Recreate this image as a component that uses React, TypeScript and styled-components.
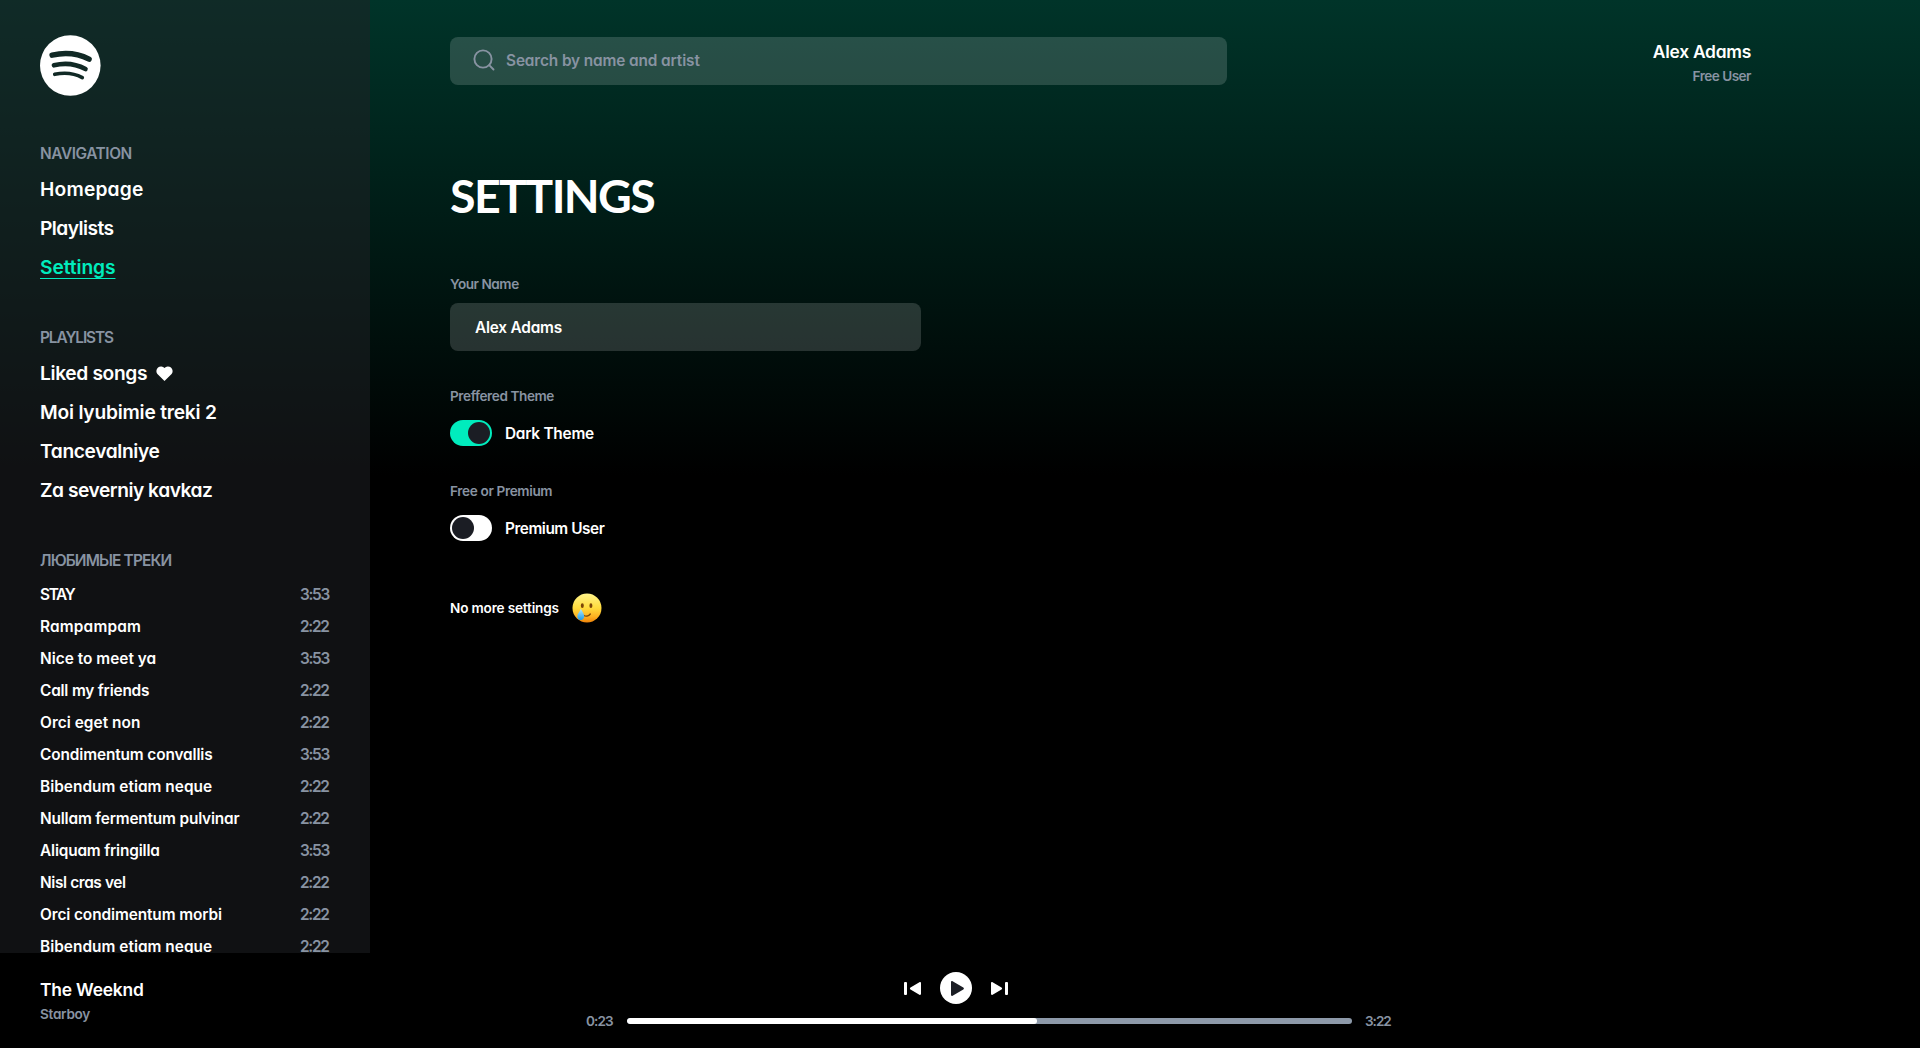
import React from "react";
import styled, { createGlobalStyle } from "styled-components";

const color = {
  text: "#fff",
  muted: "#8893a2",
  rail: "#8d99a9",
  accent: "#00ecbd",
  ink: "#1b1d24",
  field: "rgba(246, 255, 255, 0.158)",
};

const GlobalStyle = createGlobalStyle`
  *, *::before, *::after { box-sizing: border-box; }
  body {
    margin: 0;
    background: #000;
    color: ${color.text};
    font-family: Inter, "Open Sans", sans-serif;
    font-feature-settings: "cv11";
    overflow: hidden;
  }
  ul { list-style: none; margin: 0; padding: 0; }
  button { border: 0; padding: 0; background: none; color: inherit; font: inherit; cursor: pointer; }
`;

/* ---------- shell ---------- */

const Shell = styled.div`
  display: flex;
  flex-direction: column;
  height: 100vh;
  background: linear-gradient(180deg, #003429 0, #000 475px);
`;

const Body = styled.div`
  display: flex;
  flex: 1;
  min-height: 0;
`;

const Sidebar = styled.aside`
  flex: none;
  width: 370px;
  padding: 35px 40px 0;
  overflow: hidden;
  background: rgba(32, 34, 38, 0.5);
`;

const Main = styled.main`
  flex: 1;
  padding: 37px 169px 0 80px;
`;

/* ---------- text ---------- */

const Tracked = styled.span<{ $track?: number }>`
  letter-spacing: ${(p) => p.$track ?? 0}px;
  white-space: nowrap;
`;

const Caption = styled(Tracked)`
  display: block;
  font-size: 13.6px;
  font-weight: 600;
  line-height: 20px;
  color: ${color.muted};
`;

/* ---------- sidebar ---------- */

const Logo = styled.svg`
  display: block;
  width: 60.6px;
  height: 61px;
`;

const Group = styled.section<{ $top: number }>`
  margin-top: ${(p) => p.$top}px;
`;

const GroupTitle = styled.h2<{ $track?: number }>`
  margin: 0;
  font-size: 15.4px;
  font-weight: 600;
  line-height: 20px;
  letter-spacing: ${(p) => p.$track ?? 0}px;
  color: ${color.muted};
`;

const LinkList = styled.ul`
  margin-top: 6px;
`;

const LinkRow = styled.li`
  display: flex;
  align-items: center;
  gap: 9px;
  height: 39px;
`;

const NavLink = styled.a<{ $track: number; $active?: boolean }>`
  font-size: 19.2px;
  font-weight: 600;
  line-height: 39px;
  letter-spacing: ${(p) => p.$track}px;
  color: ${(p) => (p.$active ? color.accent : color.text)};
  text-decoration: ${(p) => (p.$active ? "underline" : "none")};
  text-decoration-thickness: 1px;
  text-underline-offset: 4px;
`;

const Heart = styled.svg`
  width: 17px;
  height: 15px;
  margin-top: -1px;
`;

const TrackList = styled.ul`
  margin-top: 8px;
`;

const TrackRow = styled.li`
  display: flex;
  justify-content: space-between;
  height: 32px;
  font-size: 15.4px;
  line-height: 32px;
`;

const TrackName = styled(Tracked)`
  font-weight: 600;
`;

const TrackTime = styled(Tracked)`
  width: 30px;
  font-weight: 600;
  color: ${color.muted};
`;

/* ---------- header ---------- */

const Header = styled.header`
  display: flex;
  justify-content: space-between;
  height: 48px;
`;

const SearchBox = styled.label`
  display: flex;
  align-items: center;
  width: 777px;
  height: 48px;
  padding-left: 23px;
  gap: 11px;
  border-radius: 8px;
  background: ${color.field};
  color: ${color.muted};
`;

const SearchIcon = styled.svg`
  flex: none;
  width: 22px;
  height: 22px;
  margin-top: -2px;
`;

const Input = styled.input`
  flex: 1;
  min-width: 0;
  height: 48px;
  padding: 0;
  border: 0;
  outline: 0;
  background: none;
  color: ${color.text};
  font: 600 15.4px Inter, "Open Sans", sans-serif;
  font-feature-settings: "cv11";
  letter-spacing: -0.12px;
  &::placeholder { color: ${color.muted}; opacity: 1; }
`;

const SearchInput = styled(Input)`
  height: 46px;
  margin-bottom: 2px;
`;

const User = styled.div`
  display: flex;
  flex-direction: column;
  align-items: flex-end;
  gap: 2px;
  padding-top: 3px;
`;

const UserName = styled(Tracked)`
  display: block;
  font-size: 17.4px;
  font-weight: 600;
  line-height: 24px;
`;

/* ---------- settings ---------- */

const Title = styled.h1`
  margin: 81px 0 0;
  font-family: Lato, Inter, sans-serif;
  font-size: 46.5px;
  font-weight: 700;
  line-height: 58px;
  letter-spacing: -1.6px;
`;

const Field = styled.div<{ $top: number }>`
  margin-top: ${(p) => p.$top}px;
`;

const NameBox = styled.div`
  width: 471px;
  height: 48px;
  margin-top: 9px;
  padding: 0 25px;
  border-radius: 8px;
  background: ${color.field};
`;

const NameInput = styled(Input)`
  width: 100%;
  letter-spacing: -0.22px;
`;

const SwitchRow = styled.div`
  display: flex;
  align-items: center;
  gap: 13px;
  height: 26px;
  margin-top: 14px;
`;

const Switch = styled.button<{ $on: boolean }>`
  display: flex;
  justify-content: ${(p) => (p.$on ? "flex-end" : "flex-start")};
  width: 42px;
  height: 26px;
  padding: 2px;
  border-radius: 13px;
  background: ${(p) => (p.$on ? color.accent : color.text)};
`;

const Knob = styled.span`
  width: 22px;
  height: 22px;
  border-radius: 50%;
  background: ${color.ink};
`;

const SwitchLabel = styled(Tracked)`
  padding-top: 2px;
  font-size: 15.4px;
  font-weight: 600;
  line-height: 26px;
`;

const Note = styled.p`
  display: flex;
  align-items: center;
  gap: 13px;
  height: 30px;
  margin: 52px 0 0;
  font-size: 13.6px;
  font-weight: 600;
  letter-spacing: -0.177px;
`;

const Emoji = styled.svg`
  width: 30px;
  height: 30px;
`;

/* ---------- player ---------- */

const Player = styled.footer`
  display: grid;
  grid-template-columns: 546px 806px 1fr;
  flex: none;
  height: 95px;
  padding-left: 40px;
  background: #000;
`;

const NowPlaying = styled.div`
  display: flex;
  flex-direction: column;
  gap: 2px;
  padding-top: 25px;
`;

const Artist = styled(Tracked)`
  display: block;
  font-size: 17.4px;
  font-weight: 600;
  line-height: 24px;
`;

const Controls = styled.div`
  display: flex;
  justify-content: center;
  align-items: center;
  gap: 19px;
  height: 32px;
  margin-top: 19px;
  padding-right: 66px;
`;

const RoundButton = styled.button`
  display: grid;
  place-items: center;
  width: 32px;
  height: 32px;
  padding-left: 3px;
  border-radius: 50%;
  background: ${color.text};
`;

const SkipButton = styled.button`
  display: grid;
  place-items: center;
  width: 17px;
  height: 32px;
`;

const SkipIcon = styled.svg<{ $flip?: boolean }>`
  width: 17px;
  height: 13px;
  transform: ${(p) => (p.$flip ? "scaleX(-1)" : "none")};
`;

const Timeline = styled.div`
  display: flex;
  align-items: center;
  height: 20px;
  margin-top: 7px;
`;

const TimeMark = styled(Caption)`
  width: 41px;
`;

const Rail = styled.div`
  width: 725px;
  height: 6px;
  margin-right: 13px;
  overflow: hidden;
  border-radius: 3px;
  background: ${color.rail};
`;

const RailFill = styled.div`
  height: 6px;
  border-radius: 3px;
  background: #fff;
`;

/* ---------- data ---------- */

const tracks: { name: string; time: string; track: number }[] = [
  { name: "STAY", time: "3:53", track: -1.35 },
  { name: "Rampampam", time: "2:22", track: 0.176 },
  { name: "Nice to meet ya", time: "3:53", track: 0.014 },
  { name: "Call my friends", time: "2:22", track: -0.2 },
  { name: "Orci eget non", time: "2:22", track: 0.05 },
  { name: "Condimentum convallis", time: "3:53", track: -0.12 },
  { name: "Bibendum etiam neque", time: "2:22", track: 0.026 },
  { name: "Nullam fermentum pulvinar", time: "2:22", track: -0.176 },
  { name: "Aliquam fringilla", time: "3:53", track: -0.174 },
  { name: "Nisl cras vel", time: "2:22", track: -0.383 },
  { name: "Orci condimentum morbi", time: "2:22", track: -0.096 },
  { name: "Bibendum etiam neque", time: "2:22", track: 0.026 },
];

const pages = [
  { name: "Homepage", track: 0.206 },
  { name: "Playlists", track: -0.554 },
  { name: "Settings", track: -0.077, active: true },
];

const playlists = [
  { name: "Liked songs", track: -0.349, liked: true },
  { name: "Moi lyubimie treki 2", track: -0.212 },
  { name: "Tancevalniye", track: -0.378 },
  { name: "Za severniy kavkaz", track: -0.473 },
];

const elapsed = 410;
const duration = 725;

/* ---------- parts ---------- */

const LogoMark = () => (
  <Logo viewBox="0 0 61 61" fill="none" stroke="#112925" strokeLinecap="round">
    <circle cx="30.5" cy="30.5" r="30.5" fill="#fff" stroke="none" />
    <path d="M12.200 20.100c13.300-3 26-1.700 37.200 4" strokeWidth="5.500" />
    <path d="M14 30.300c11-2.700 22.500-1.300 31.800 3.800" strokeWidth="4.600" />
    <path d="M14.800 39.400c10.100-2.200 19.500-1.200 27.800 3.300" strokeWidth="3.600" />
  </Logo>
);

const TearEmoji = () => (
  <Emoji viewBox="0 0 30 30">
    <defs>
      <linearGradient id="face" x1="0" y1="0" x2="0" y2="1">
        <stop offset="0" stopColor="#fff48a" />
        <stop offset="0.5" stopColor="#ffdb3c" />
        <stop offset="0.800" stopColor="#fdb021" />
        <stop offset="1" stopColor="#ee8209" />
      </linearGradient>
      <linearGradient id="drop" x1="0" y1="0" x2="0" y2="1">
        <stop offset="0" stopColor="#b5ecff" />
        <stop offset="1" stopColor="#1e9be6" />
      </linearGradient>
    </defs>
    <circle cx="15" cy="15" r="14.500" fill="url(#face)" />
    <ellipse cx="10.300" cy="12.700" rx="1.500" ry="2.400" fill="#7a4508" />
    <ellipse cx="18.900" cy="12.700" rx="1.500" ry="2.400" fill="#7a4508" />
    <path d="M11.500 22.200c2.200 1.500 5.200 1 6.800-1.200" fill="none" stroke="#7a4508" strokeWidth="1.300" strokeLinecap="round" />
    <path d="M8.800 15.700c1.500 3 3.400 5.200 3.400 7.500 0 2.300-1.500 3.800-3.500 3.800s-3.400-1.500-3.400-3.700c0-2.500 2.500-4.500 3.500-7.600z" fill="url(#drop)" />
  </Emoji>
);

const SkipGlyph = ({ flip }: { flip?: boolean }) => (
  <SkipIcon viewBox="0 0 17 13" fill="#fff" $flip={flip}>
    <path d="M0 1.200C0 .2.800-.2 1.600.3l8.900 5.300c.8.500.8 1.300 0 1.800l-8.900 5.300C.8 13.200 0 12.800 0 11.800z" />
    <rect x="14" y="0" width="3" height="13" rx="1" />
  </SkipIcon>
);

export default function App() {
  return (
    <>
      <GlobalStyle />
      <Shell>
        <Body>
          <Sidebar>
            <LogoMark />
            <Group $top={48}>
              <GroupTitle $track={-0.42}>NAVIGATION</GroupTitle>
              <LinkList>
                {pages.map((p) => (
                  <LinkRow key={p.name}>
                    <NavLink $track={p.track} $active={p.active}>{p.name}</NavLink>
                  </LinkRow>
                ))}
              </LinkList>
            </Group>
            <Group $top={41}>
              <GroupTitle $track={-1.08}>PLAYLISTS</GroupTitle>
              <LinkList>
                {playlists.map((p) => (
                  <LinkRow key={p.name}>
                    <NavLink $track={p.track}>{p.name}</NavLink>
                    {p.liked && (
                      <Heart viewBox="0 0 17 15" fill="#fff">
                        <path d="M8.500 15 1.400 8A4.650 4.650 0 0 1 8.500 2a4.650 4.650 0 0 1 7.100 6z" />
                      </Heart>
                    )}
                  </LinkRow>
                ))}
              </LinkList>
            </Group>
            <Group $top={41}>
              <GroupTitle $track={-0.85}>ЛЮБИМЫЕ ТРЕКИ</GroupTitle>
              <TrackList>
                {tracks.map((t, i) => (
                  <TrackRow key={i}>
                    <TrackName $track={t.track}>{t.name}</TrackName>
                    <TrackTime $track={-1.3}>{t.time}</TrackTime>
                  </TrackRow>
                ))}
              </TrackList>
            </Group>
          </Sidebar>
          <Main>
            <Header>
              <SearchBox>
                <SearchIcon viewBox="0 0 22 22" fill="none" stroke="currentColor" strokeWidth="1.900" strokeLinecap="round">
                  <circle cx="10" cy="10" r="8.600" />
                  <path d="m16.200 16.200 4.300 4.300" />
                </SearchIcon>
                <SearchInput placeholder="Search by name and artist" />
              </SearchBox>
              <User>
                <UserName $track={-0.25}>Alex Adams</UserName>
                <Caption $track={-0.52}>Free User</Caption>
              </User>
            </Header>
            <Title>SETTINGS</Title>
            <Field $top={50}>
              <Caption $track={-0.46}>Your Name</Caption>
              <NameBox>
                <NameInput defaultValue="Alex Adams" />
              </NameBox>
            </Field>
            <Field $top={35}>
              <Caption $track={-0.42}>Preffered Theme</Caption>
              <SwitchRow>
                <Switch $on><Knob /></Switch>
                <SwitchLabel $track={-0.251}>Dark Theme</SwitchLabel>
              </SwitchRow>
            </Field>
            <Field $top={35}>
              <Caption $track={-0.36}>Free or Premium</Caption>
              <SwitchRow>
                <Switch $on={false}><Knob /></Switch>
                <SwitchLabel $track={-0.458}>Premium User</SwitchLabel>
              </SwitchRow>
            </Field>
            <Note>
              No more settings
              <TearEmoji />
            </Note>
          </Main>
        </Body>
        <Player>
          <NowPlaying>
            <Artist $track={-0.197}>The Weeknd</Artist>
            <Caption $track={-0.3}>Starboy</Caption>
          </NowPlaying>
          <div>
            <Controls>
              <SkipButton><SkipGlyph flip /></SkipButton>
              <RoundButton>
                <svg width="13" height="15" viewBox="0 0 13 15" fill={color.ink}>
                  <path d="M0 1.200C0 .2.800-.2 1.600.3l10.700 6.200c.8.500.8 1.500 0 2L1.600 14.700C.8 15.200 0 14.800 0 13.800z" />
                </svg>
              </RoundButton>
              <SkipButton><SkipGlyph /></SkipButton>
            </Controls>
            <Timeline>
              <TimeMark $track={-0.95}>0:23</TimeMark>
              <Rail>
                <RailFill style={{ width: `${(elapsed / duration) * 100}%` }} />
              </Rail>
              <Caption $track={-1.05}>3:22</Caption>
            </Timeline>
          </div>
        </Player>
      </Shell>
    </>
  );
}
